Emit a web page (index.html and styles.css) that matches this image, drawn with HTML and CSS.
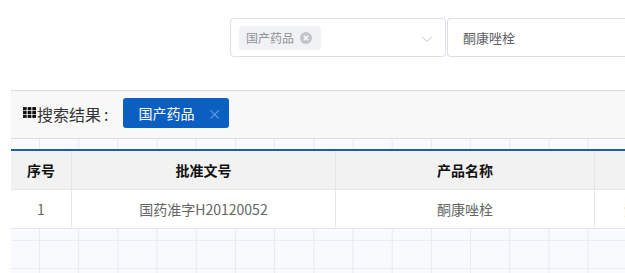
FILE: index.html
```html
<!DOCTYPE html>
<html lang="zh">
<head>
<meta charset="utf-8">
<link rel="stylesheet" href="styles.css">
</head>
<body>
<div class="top">
  <div class="select">
    <span class="stag">国产药品<span class="stag-close"><svg width="12" height="12" viewBox="0 0 12 12"><circle cx="6" cy="6" r="6" fill="#c0c4cc"/><path d="M3.8 3.8L8.2 8.2M8.2 3.8L3.8 8.2" stroke="#fff" stroke-width="1.3"/></svg></span></span>
    <svg class="arrow" width="12" height="8" viewBox="0 0 12 8"><path d="M1 1.5L6 6.5L11 1.5" fill="none" stroke="#c0c4cc" stroke-width="1"/></svg>
  </div>
  <div class="input">酮康唑栓</div>
</div>
<div class="content">
  <div class="resbar">
    <span class="icon"><svg width="13" height="11" viewBox="0 0 12 10"><g fill="#111"><rect x="0" y="0" width="3.4" height="2.9"/><rect x="4.3" y="0" width="3.4" height="2.9"/><rect x="8.6" y="0" width="3.4" height="2.9"/><rect x="0" y="3.55" width="3.4" height="2.9"/><rect x="4.3" y="3.55" width="3.4" height="2.9"/><rect x="8.6" y="3.55" width="3.4" height="2.9"/><rect x="0" y="7.1" width="3.4" height="2.9"/><rect x="4.3" y="7.1" width="3.4" height="2.9"/><rect x="8.6" y="7.1" width="3.4" height="2.9"/></g></svg></span>
    <span class="label">搜索结果<span class="colon">:</span></span>
    <span class="btag">国产药品<span class="btag-x">×</span></span>
  </div>
  <div class="tblwrap">
    <table class="tbl">
      <thead>
        <tr><th class="c1">序号</th><th class="c2">批准文号</th><th class="c3">产品名称</th><th class="c4"></th></tr>
      </thead>
      <tbody>
        <tr><td>1</td><td>国药准字H20120052</td><td>酮康唑栓</td><td class="c4d">浙</td></tr>
      </tbody>
    </table>
  </div>
</div>
</body>
</html>
```
FILE: styles.css
```css
html, body {
  margin: 0;
  padding: 0;
  background: #fff;
  overflow: hidden;
  width: 625px;
  height: 273px;
}
body {
  font-family: "Noto Sans CJK SC", "Noto Sans", sans-serif;
}
.top {
  display: flex;
  height: 90px;
  padding-left: 230px;
  padding-top: 18px;
  box-sizing: border-box;
  gap: 1px;
  overflow: hidden;
}
.select {
  flex-shrink: 0;
  width: 216px;
  height: 39px;
  border: 1px solid #dcdfe6;
  border-radius: 4px;
  box-sizing: border-box;
  display: flex;
  align-items: center;
  padding-left: 8px;
  position: relative;
}
.stag {
  display: inline-flex;
  align-items: center;
  height: 24px;
  background: #f0f2f5;
  color: #909399;
  font-size: 12px;
  padding: 0 9px 0 7px;
  border-radius: 4px;
}
.stag-close {
  display: inline-flex;
  margin-left: 6px;
}
.arrow {
  position: absolute;
  right: 12px;
  top: 16px;
}
.input {
  flex-shrink: 0;
  width: 200px;
  height: 39px;
  border: 1px solid #dcdfe6;
  border-right: none;
  border-radius: 4px 0 0 4px;
  box-sizing: border-box;
  display: flex;
  align-items: center;
  padding-left: 15px;
  font-size: 13px;
  color: #606266;
}
.content {
  margin-left: 11px;
  height: 183px;
  background-color: #f8fafd;
  background-image:
    linear-gradient(to right, #e6eaf1 1px, transparent 1px),
    linear-gradient(to bottom, #eaedf3 1px, transparent 1px);
  background-size: 39.2px 28px;
  background-position: 28px 10px, 0 10px;
}
.resbar {
  height: 49px;
  box-sizing: border-box;
  background: #f8f8f8;
  border-top: 1px solid #dcdcdc;
  border-bottom: 1px solid #dcdcdc;
  display: flex;
  align-items: center;
  padding-left: 12px;
}
.icon {
  display: inline-flex;
  margin-right: 1px;
  margin-top: -4px;
}
.label {
  font-size: 16px;
  color: #333;
  margin-top: -2px;
}
.colon {
  margin-left: 3px;
}
.btag {
  margin-left: 15px;
  height: 30px;
  width: 106px;
  flex-shrink: 0;
  box-sizing: border-box;
  background: #0b5fc1;
  color: #fff;
  border-radius: 3px;
  font-size: 14px;
  display: inline-flex;
  align-items: center;
  padding-left: 15px;
  margin-top: -3px;
}
.btag-x {
  color: #6c9de0;
  font-size: 14px;
  margin-left: 13px;
}
.tblwrap {
  margin-top: 10px;
  width: 614px;
  overflow: hidden;
}
.tbl {
  border-collapse: collapse;
  border-top: 2px solid #1c5fa7;
  table-layout: fixed;
  width: 781px;
  font-size: 14px;
}
.tbl th {
  background: #f2f2f2;
  height: 38px;
  font-weight: bold;
  color: #111;
  border-right: 1px solid #e6e6e6;
  border-bottom: 1px solid #e6e6e6;
  padding: 0;
}
.tbl td {
  background: #fff;
  height: 38px;
  color: #666;
  text-align: center;
  border-right: 1px solid #e6e6e6;
  border-bottom: 1px solid #e6e6e6;
  padding: 0;
  white-space: nowrap;
  overflow: hidden;
}
.c1 { width: 60px; }
.c2 { width: 263px; }
.c3 { width: 258px; }
.c4 { width: 200px; }
.tbl td.c4d {
  text-align: left;
  padding-left: 29px;
  color: #b08a3a;
}
```
